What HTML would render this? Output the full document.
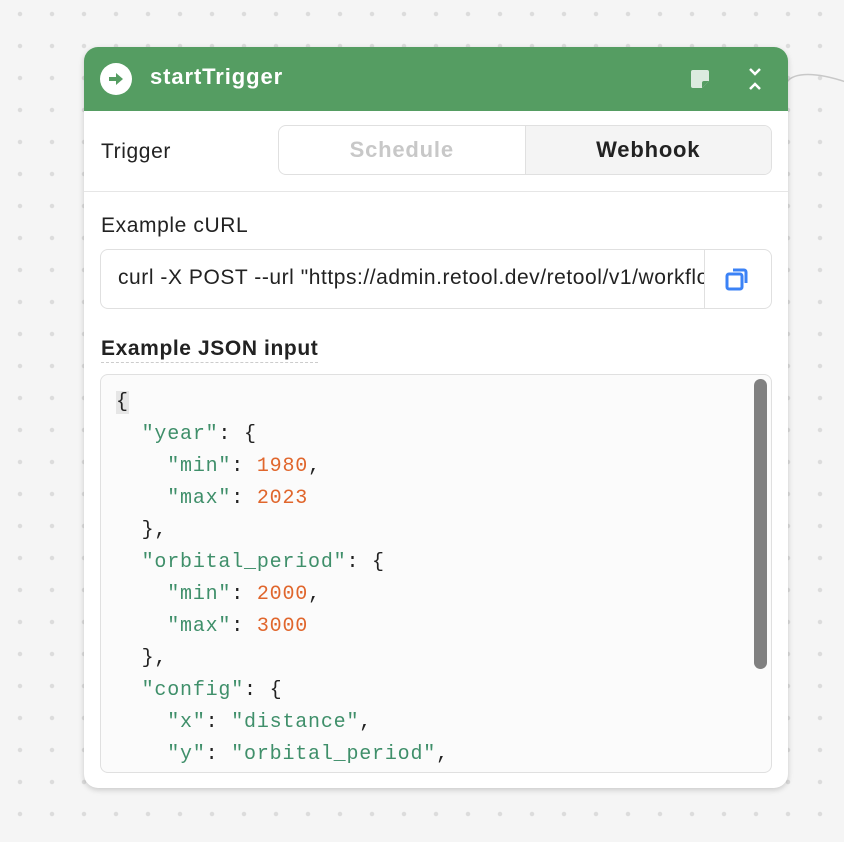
<!DOCTYPE html>
<html><head><style>
body{margin:0;width:844px;height:842px;overflow:hidden;background-color:#f5f5f5;background-image:radial-gradient(circle,#dcdcdc 2px,transparent 2.5px);background-size:32px 32px;background-position:4px -2px;font-family:"Liberation Sans",sans-serif;position:relative}
.card{position:absolute;left:84px;top:47px;width:704px;height:741px;background:#fff;border-radius:14px;box-shadow:0 2px 6px rgba(0,0,0,.18);overflow:hidden}
.hdr{height:64px;background:#559d62;position:relative;color:#fff}
.hdr .ic{position:absolute;left:16px;top:16px;width:32px;height:32px;border-radius:50%;background:#fff}
.hdr .t{position:absolute;left:66px;top:17px;font-size:22px;letter-spacing:0.9px;font-weight:bold}
.row{height:80px;border-bottom:1px solid #e6e6e6;position:relative}
.lbl{position:absolute;font-size:21px;letter-spacing:0.6px;color:#222}
.seg{position:absolute;left:194px;top:14px;width:494px;height:50px;border:1.5px solid #e0e0e0;border-radius:8px;display:flex;overflow:hidden;box-sizing:border-box}
.seg div{flex:1;text-align:center;line-height:47px;font-size:22px;letter-spacing:0.8px;font-weight:bold}
.curl{position:absolute;left:16px;top:202px;width:672px;height:60px;border:1.5px solid #e0e0e0;border-radius:8px;box-sizing:border-box;overflow:hidden}
.curl .tx{position:absolute;left:17px;top:16px;font-size:21px;letter-spacing:0.55px;color:#222;white-space:nowrap;width:586px;overflow:hidden}
.curl .btn{position:absolute;right:0;top:0;width:66px;height:100%;border-left:1.5px solid #e0e0e0}
.code{position:absolute;left:16px;top:327px;width:672px;height:399px;border:1.5px solid #e0e0e0;border-radius:8px;box-sizing:border-box;background:#fbfbfb;overflow:hidden}
pre{margin:0;position:absolute;left:15px;top:12px;font-family:"Liberation Mono",monospace;font-size:20px;letter-spacing:0.8px;line-height:32px;color:#222}
.s{color:#3f8f6a}.n{color:#e0662c}
.sb{position:absolute;right:4px;top:4px;width:13px;height:290px;background:#808080;border-radius:7px}
</style></head><body>
<svg style="position:absolute;left:786px;top:68px" width="60" height="30"><path d="M1 14 C8 4 30 4 60 14" stroke="#c8c8c8" stroke-width="1.5" fill="none"/></svg>
<div class="card">
 <div class="hdr">
  <div class="ic"><svg width="32" height="32" viewBox="0 0 32 32"><path d="M9 16h10" stroke="#559d62" stroke-width="4"/><path d="M16 10l7 6-7 6z" fill="#559d62"/></svg></div>
  <div class="t">startTrigger</div>
  <svg style="position:absolute;left:606px;top:22px" width="20" height="20" viewBox="0 0 20 20"><path d="M3 1h14a2 2 0 0 1 2 2v9l-7 7H3a2 2 0 0 1-2-2V3a2 2 0 0 1 2-2z" fill="#dcebdf"/><path d="M12 19v-5a2 2 0 0 1 2-2h5z" fill="#559d62"/></svg>
  <svg style="position:absolute;left:662px;top:20px" width="18" height="24" viewBox="0 0 18 24"><path d="M4 2l5 5 5-5M4 22l5-5 5 5" stroke="#fff" stroke-width="2.5" fill="none"/></svg>
 </div>
 <div class="row">
  <div class="lbl" style="left:17px;top:29px">Trigger</div>
  <div class="seg"><div style="color:#c8c8c8;border-right:1.5px solid #e0e0e0">Schedule</div><div style="background:#f4f4f4;color:#222">Webhook</div></div>
 </div>
 <div class="lbl" style="left:17px;top:167px">Example cURL</div>
 <div class="curl"><div class="tx">curl -X POST --url "https://admin.retool.dev/retool/v1/workflows</div><div class="btn"><svg style="position:absolute;left:20px;top:16px" width="26" height="26" viewBox="0 0 26 26"><rect x="2" y="8" width="15" height="15" rx="2" fill="none" stroke="#3b82f6" stroke-width="3"/><path d="M8 4h11a2 2 0 0 1 2 2v11" fill="none" stroke="#3b82f6" stroke-width="3"/></svg></div></div>
 <div class="lbl" style="left:17px;top:290px;font-weight:bold;border-bottom:1.5px dashed #ccc;padding-bottom:1px">Example JSON input</div>
 <div class="code"><pre><span style="background:#e6e6e6">{</span>
  <span class="s">"year"</span>: {
    <span class="s">"min"</span>: <span class="n">1980</span>,
    <span class="s">"max"</span>: <span class="n">2023</span>
  },
  <span class="s">"orbital_period"</span>: {
    <span class="s">"min"</span>: <span class="n">2000</span>,
    <span class="s">"max"</span>: <span class="n">3000</span>
  },
  <span class="s">"config"</span>: {
    <span class="s">"x"</span>: <span class="s">"distance"</span>,
    <span class="s">"y"</span>: <span class="s">"orbital_period"</span>,
</pre><div class="sb"></div></div>
</div>
</body></html>
